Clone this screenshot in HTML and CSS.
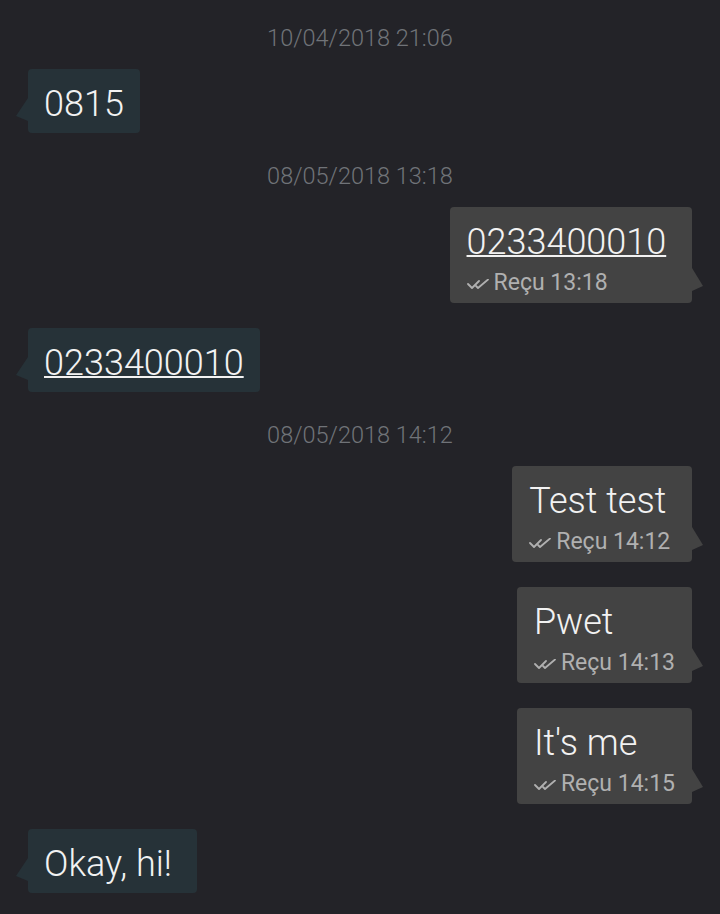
FILE: index.html
```html
<!DOCTYPE html>
<html lang="fr">
<head>
  <meta charset="UTF-8">
  <meta name="viewport" content="width=device-width, initial-scale=1.0">
  <title>Conversation</title>
  <link rel="stylesheet" href="styles.css">
</head>
<body>
  <main class="chat">
    <div class="stamp">10/04/2018 21:06</div>

    <div class="msg msg-in">
      <div class="msg-text">0815</div>
    </div>

    <div class="stamp">08/05/2018 13:18</div>

    <div class="msg msg-out">
      <div class="msg-text"><a href="#">0233400010</a>&nbsp;</div>
      <div class="msg-status">
        <svg class="ticks" viewBox="0 0 22 10" width="22" height="10">
          <polyline points="1,5 5,9 12,2" />
          <polyline points="9,7 11,9 21,0.5" />
        </svg>
        Reçu 13:18
      </div>
    </div>

    <div class="msg msg-in">
      <div class="msg-text"><a href="#">0233400010</a></div>
    </div>

    <div class="stamp">08/05/2018 14:12</div>

    <div class="msg msg-out">
      <div class="msg-text">Test test&nbsp;</div>
      <div class="msg-status">
        <svg class="ticks" viewBox="0 0 22 10" width="22" height="10">
          <polyline points="1,5 5,9 12,2" />
          <polyline points="9,7 11,9 21,0.5" />
        </svg>
        Reçu 14:12
      </div>
    </div>

    <div class="msg msg-out">
      <div class="msg-text">Pwet</div>
      <div class="msg-status">
        <svg class="ticks" viewBox="0 0 22 10" width="22" height="10">
          <polyline points="1,5 5,9 12,2" />
          <polyline points="9,7 11,9 21,0.5" />
        </svg>
        Reçu 14:13
      </div>
    </div>

    <div class="msg msg-out">
      <div class="msg-text">It's me</div>
      <div class="msg-status">
        <svg class="ticks" viewBox="0 0 22 10" width="22" height="10">
          <polyline points="1,5 5,9 12,2" />
          <polyline points="9,7 11,9 21,0.5" />
        </svg>
        Reçu 14:15
      </div>
    </div>

    <div class="msg msg-in">
      <div class="msg-text">Okay, hi!&nbsp;</div>
    </div>
  </main>
</body>
</html>
```

FILE: styles.css
```css
*, *::before, *::after {
  box-sizing: border-box;
}

body {
  margin: 0;
  background: #232328;
  font-family: Roboto, "Liberation Sans", sans-serif;
  font-weight: 300;
  color: #f2f2f2;
}

.chat {
  display: flex;
  flex-direction: column;
  padding: 20px 28px 0;
  min-height: 914px;
}

.stamp {
  margin: 6px 0 19px;
  line-height: 24px;
  font-size: 23.5px;
  text-align: center;
  color: #707378;
}

/* bulles */
.msg {
  position: relative;
  margin-bottom: 25px;
  border-radius: 4px;
  padding: 15px 16px 9px;
}

.msg::before {
  content: "";
  position: absolute;
  bottom: 12px;
  width: 12px;
  height: 23px;
  background: inherit;
}

.msg-in {
  align-self: flex-start;
  background: #263238;
}

.msg-in::before {
  left: -12px;
  clip-path: polygon(100% 0, 0 78%, 100% 100%);
}

.msg-out {
  align-self: flex-end;
  background: #434343;
  padding: 15px 17px 6px 17px;
}

.msg-out::before {
  right: -11px;
  width: 11px;
  clip-path: polygon(0 0, 100% 78%, 0 100%);
}

.msg-text {
  font-size: 36px;
  line-height: 40px;
  white-space: nowrap;
}

.msg-text a {
  color: inherit;
  text-decoration: underline;
  text-decoration-thickness: 2px;
}

.msg-status {
  display: flex;
  align-items: center;
  gap: 5px;
  margin-top: 7px;
  font-size: 23px;
  line-height: 28px;
  color: #b0b0b0;
  font-weight: 400;
}

.ticks {
  fill: none;
  stroke: #b0b0b0;
  stroke-width: 1.8;
  stroke-linecap: round;
  stroke-linejoin: round;
  margin-top: 2px;
}
```
